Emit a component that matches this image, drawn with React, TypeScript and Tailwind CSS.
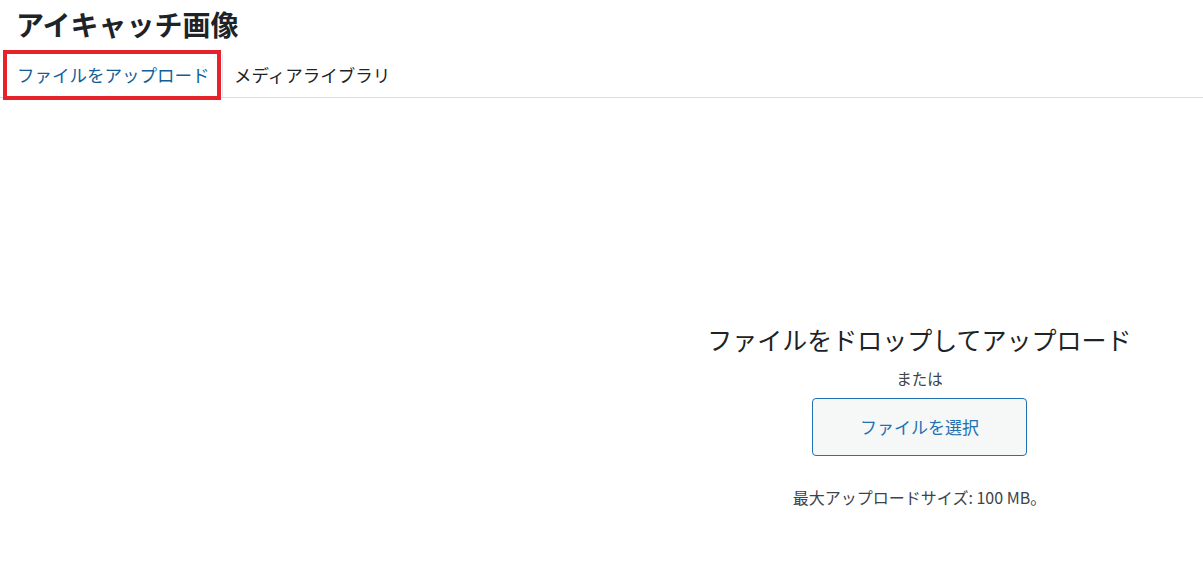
import React from 'react'

const font = { fontFamily: '"Noto Sans CJK JP", "Noto Sans", sans-serif' }

export default function App() {
  return (
    <div className="w-[1203px] h-[564px] bg-white flex flex-col overflow-hidden text-[#1d2327]" style={font}>
      {/* タイトル */}
      <h1 className="pl-4 pt-[4px] h-[54px] text-[28px] leading-[40px] font-bold">アイキャッチ画像</h1>

      {/* タブ */}
      <div className="flex items-start h-[44px] border-b border-[#dcdcde]">
        <div className="ml-[3px] -mt-[4px] w-[218px] h-[50px] shrink-0 flex items-center pl-[10px] border-4 border-[#e6222b] text-[17.5px] text-[#135e96] relative z-10">
          ファイルをアップロード
        </div>
        <div className="ml-[1px] w-px h-[43px] bg-[#d4e3f1]" />
        <div className="pl-[11px] flex items-center h-[42px] text-[17.5px]">メディアライブラリ</div>
      </div>

      {/* アップロード領域 */}
      <div className="flex flex-1">
        <div className="w-[636px]" />
        <div className="w-[567px] flex flex-col items-center pt-[224px]">
          <p className="text-[25px] leading-[34px]">ファイルをドロップしてアップロード</p>
          <p className="mt-[11px] text-[15.5px] leading-[22px] text-[#3c434a]">または</p>
          <button className="mt-[9px] w-[215px] h-[58px] rounded-[4px] border border-[#2271b1] bg-[#f6f7f7] text-[#2271b1] text-[17px]">
            ファイルを選択
          </button>
          <p className="mt-[30px] text-[16px] leading-[22px] text-[#3c434a]">最大アップロードサイズ: 100 MB。</p>
        </div>
      </div>
    </div>
  )
}
